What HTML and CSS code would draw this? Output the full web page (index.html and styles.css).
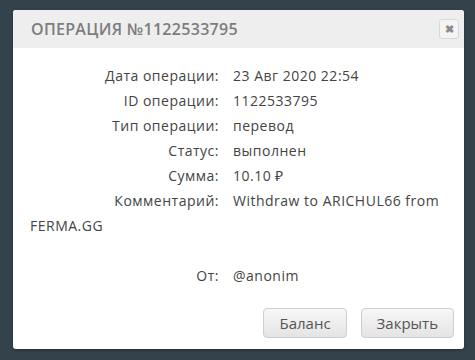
FILE: index.html
```html
<!DOCTYPE html>
<html lang="ru">
<head>
  <meta charset="UTF-8">
  <title>Операция</title>
  <link rel="stylesheet" href="styles.css">
</head>
<body>

<div class="modal">
  <div class="modal-header">
    <h3 class="modal-title">Операция №1122533795</h3>
    <button class="modal-close" type="button">&#10006;</button>
  </div>

  <div class="modal-body">
    <div class="info"><span class="info-label">Дата операции:</span><span class="info-value">23 Авг 2020 22:54</span></div>
    <div class="info"><span class="info-label">ID операции:</span><span class="info-value">1122533795</span></div>
    <div class="info"><span class="info-label">Тип операции:</span><span class="info-value">перевод</span></div>
    <div class="info"><span class="info-label">Статус:</span><span class="info-value">выполнен</span></div>
    <div class="info"><span class="info-label">Сумма:</span><span class="info-value">10.10 ₽</span></div>
    <div class="info"><span class="info-label">Комментарий:</span><span class="info-value">Withdraw to ARICHUL66 from FERMA.GG</span></div>
    <div class="info info-empty"></div>
    <div class="info"><span class="info-label">От:</span><span class="info-value">@anonim</span></div>
  </div>

  <div class="modal-footer">
    <button class="btn" type="button">Баланс</button>
    <button class="btn" type="button">Закрыть</button>
  </div>
</div>

</body>
</html>
```

FILE: styles.css
```css
/* page behind the dialog */
body {
  margin: 0;
  padding: 10px 11px 11px 13px;
  background-color: #34434b;
  font-family: "Open Sans", Arial, sans-serif;
}

.modal {
  width: 451px;
  background-color: #fff;
  border-radius: 3px;
  box-shadow: 0 1px 3px rgba(0, 0, 0, 0.3);
  overflow: hidden;
}

.modal-header {
  display: flex;
  align-items: center;
  justify-content: space-between;
  height: 38px;
  padding: 0 5px 0 18px;
  background-color: #eeeeee;
}

.modal-title {
  margin: 0;
  font-size: 16px;
  font-weight: 600;
  letter-spacing: 0.3px;
  text-transform: uppercase;
  color: #7d7d7d;
}

.modal-close {
  display: flex;
  align-items: center;
  justify-content: center;
  width: 20px;
  height: 20px;
  padding: 0;
  border: 1px solid #d8d8d8;
  border-radius: 3px;
  background-color: #f4f4f4;
  color: #8a8a8a;
  font-size: 11px;
  font-weight: bold;
}

.modal-body {
  padding: 15px 20px 0 17px;
  font-size: 14px;
  line-height: 25px;
  letter-spacing: 0.5px;
  color: #444;
}

.info-label {
  display: inline-block;
  width: 189px;
  margin-right: 14px;
  text-align: right;
}

.info-empty {
  height: 25px;
}

.modal-footer {
  display: flex;
  justify-content: flex-end;
  gap: 14px;
  padding: 20px 10px 11px 0;
}

.btn {
  height: 30px;
  padding: 0 15px;
  border: 1px solid #cfcfcf;
  border-radius: 4px;
  background: linear-gradient(#f7f7f7, #e4e4e4);
  font-family: "Open Sans", Arial, sans-serif;
  font-size: 15px;
  color: #555;
}
```
